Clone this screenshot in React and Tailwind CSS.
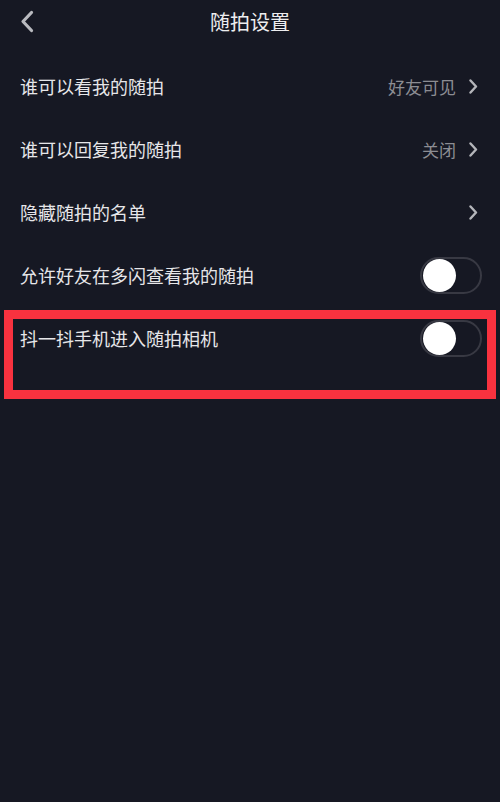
import React from 'react'

const ROWS = [
  { label: '谁可以看我的随拍', value: '好友可见', type: 'link' },
  { label: '谁可以回复我的随拍', value: '关闭', type: 'link' },
  { label: '隐藏随拍的名单', type: 'link' },
  { label: '允许好友在多闪查看我的随拍', type: 'toggle' },
  { label: '抖一抖手机进入随拍相机', type: 'toggle' },
]

function Chevron() {
  return (
    <svg width="11" height="15" viewBox="0 0 11 15" fill="none" className="shrink-0">
      <path d="M2.5 1.5 L8 7.5 L2.5 13.5" stroke="#b4b5ba" strokeWidth="2.4" strokeLinecap="round" strokeLinejoin="round" />
    </svg>
  )
}

function Toggle() {
  return (
    <div className="w-[62px] h-[37px] rounded-full border-2 border-[#383943] flex items-center px-[1px] shrink-0 mr-[-3px]">
      <div className="w-[33px] h-[33px] rounded-full bg-white" />
    </div>
  )
}

function Row({ row }) {
  return (
    <div className="h-[63px] flex items-center justify-between pl-5 pr-[21px]">
      <span className="text-[18px] text-[#e6e6e9]">{row.label}</span>
      {row.type === 'link' ? (
        <div className="flex items-center gap-[12px]">
          {row.value && <span className="text-[17px] text-[#8c8d93]">{row.value}</span>}
          <Chevron />
        </div>
      ) : (
        <Toggle />
      )}
    </div>
  )
}

export default function App() {
  return (
    <div
      className="relative w-[500px] h-[802px] bg-[#161823] overflow-hidden"
      style={{ fontFamily: '"Noto Sans CJK SC", "Noto Sans", sans-serif' }}
    >
      <div className="h-[44px] flex items-center justify-center relative">
        <svg width="16" height="24" viewBox="0 0 16 24" fill="none" className="absolute left-[19px] top-[10px]">
          <path d="M12.5 2.5 L4 11.5 L12.5 20.5" stroke="#b9babf" strokeWidth="3.2" strokeLinecap="round" strokeLinejoin="round" />
        </svg>
        <span className="text-[20px] text-[#ededef]">随拍设置</span>
      </div>
      <div className="mt-[11px]">
        {ROWS.map((r) => (
          <Row key={r.label} row={r} />
        ))}
      </div>
      <div className="absolute left-[4px] top-[310px] w-[492px] h-[89px] border-[9px] border-[#f8323f]" />
    </div>
  )
}
